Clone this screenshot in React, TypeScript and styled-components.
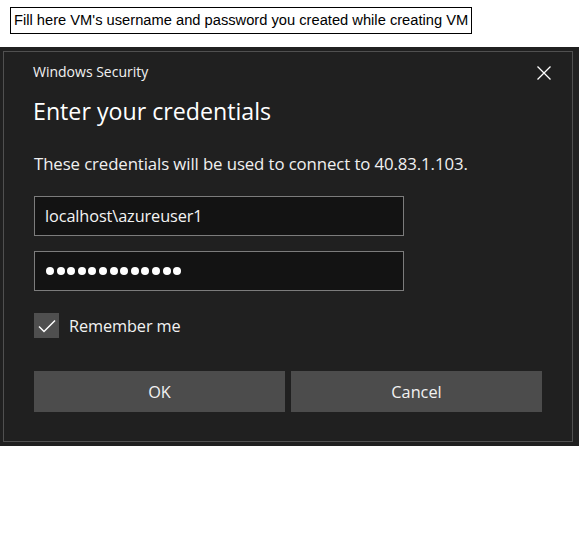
import React from "react";
import styled, { createGlobalStyle } from "styled-components";

const Global = createGlobalStyle`
  html, body { margin: 0; padding: 0; background: #ffffff; }
  body { width: 579px; height: 553px; overflow: hidden; }
`;

const Page = styled.div`
  display: flex;
  flex-direction: column;
  align-items: flex-start;
  padding-top: 7px;
`;

const Note = styled.div`
  margin-left: 10px;
  height: 25px;
  border: 1px solid #000;
  padding: 0 3px;
  font-family: "Liberation Sans", Arial, sans-serif;
  font-size: 14.7px;
  line-height: 25px;
  color: #000;
  white-space: nowrap;
`;

const Dialog = styled.div`
  margin-top: 13px;
  width: 579px;
  height: 399px;
  box-sizing: border-box;
  background: #202020;
  padding: 4px 6px 4px 3px;
`;

const Frame = styled.div`
  height: 100%;
  box-sizing: border-box;
  border: 1px solid #505050;
  padding: 9px 20px 0 29px;
  display: flex;
  flex-direction: column;
  font-family: "Open Sans", "Noto Sans", sans-serif;
  color: #ffffff;
`;

const Header = styled.div`
  display: flex;
  justify-content: space-between;
  align-items: center;
  height: 22px;
`;

const AppName = styled.div`
  font-size: 14px;
  line-height: 22px;
  color: #f2f2f2;
`;

const CloseButton = styled.button`
  width: 16px;
  height: 16px;
  padding: 0;
  border: 0;
  background: transparent;
  display: flex;
  align-items: center;
  justify-content: center;
  margin-top: 2px;
`;

const Title = styled.div`
  margin-top: 13px;
  font-size: 23.2px;
  line-height: 30px;
  font-weight: 400;
  color: #ffffff;
`;

const Message = styled.div`
  margin-top: 27px;
  font-size: 16.8px;
  line-height: 22px;
  color: #f0f0f0;
  margin-left: 1px;
  letter-spacing: -0.1px;
  white-space: nowrap;
`;

const Field = styled.div<{ $top: number }>`
  margin-top: ${(p) => p.$top}px;
  margin-left: 1px;
  width: 370px;
  height: 40px;
  box-sizing: border-box;
  border: 1px solid #7c7c7c;
  background: #131313;
  display: flex;
  align-items: center;
  padding-left: 10px;
  font-size: 16.3px;
  color: #f4f4f4;
  letter-spacing: -0.1px;
`;

const Dots = styled.div`
  display: flex;
  gap: 2.6px;
  padding-left: 1px;
`;

const Dot = styled.span`
  width: 8px;
  height: 8px;
  border-radius: 50%;
  background: #ffffff;
`;

const CheckRow = styled.div`
  margin-top: 22px;
  margin-left: 1px;
  display: flex;
  align-items: center;
  gap: 10px;
  height: 25px;
`;

const CheckBox = styled.div`
  width: 25px;
  height: 25px;
  background: #4f4f4f;
  display: flex;
  align-items: center;
  justify-content: center;
`;

const CheckLabel = styled.span`
  font-size: 16.3px;
  color: #f2f2f2;
  letter-spacing: -0.1px;
`;

const Buttons = styled.div`
  margin-top: 33px;
  margin-left: 1px;
  display: grid;
  grid-template-columns: 251px 251px;
  gap: 6px;
`;

const Button = styled.div`
  height: 41px;
  background: #4c4c4c;
  display: flex;
  align-items: center;
  justify-content: center;
  font-size: 16.3px;
  color: #f2f2f2;
`;

export default function App() {
  return (
    <>
      <Global />
      <Page>
        <Note>Fill here VM's username and password you created while creating VM</Note>
        <Dialog>
          <Frame>
            <Header>
              <AppName>Windows Security</AppName>
              <CloseButton aria-label="Close">
                <svg width="14" height="14" viewBox="0 0 14 14">
                  <path d="M0.5 0.5 L13.5 13.5 M13.5 0.5 L0.5 13.5" stroke="#ffffff" strokeWidth="1.3" fill="none" />
                </svg>
              </CloseButton>
            </Header>
            <Title>Enter your credentials</Title>
            <Message>These credentials will be used to connect to 40.83.1.103.</Message>
            <Field $top={21}>localhost\azureuser1</Field>
            <Field $top={15}>
              <Dots>
                {Array.from({ length: 13 }).map((_, i) => (
                  <Dot key={i} />
                ))}
              </Dots>
            </Field>
            <CheckRow>
              <CheckBox>
                <svg width="18" height="14" viewBox="0 0 18 14">
                  <path d="M1 7.5 L6 12.5 L17 1.5" stroke="#ffffff" strokeWidth="1.5" fill="none" />
                </svg>
              </CheckBox>
              <CheckLabel>Remember me</CheckLabel>
            </CheckRow>
            <Buttons>
              <Button>OK</Button>
              <Button>Cancel</Button>
            </Buttons>
          </Frame>
        </Dialog>
      </Page>
    </>
  );
}
